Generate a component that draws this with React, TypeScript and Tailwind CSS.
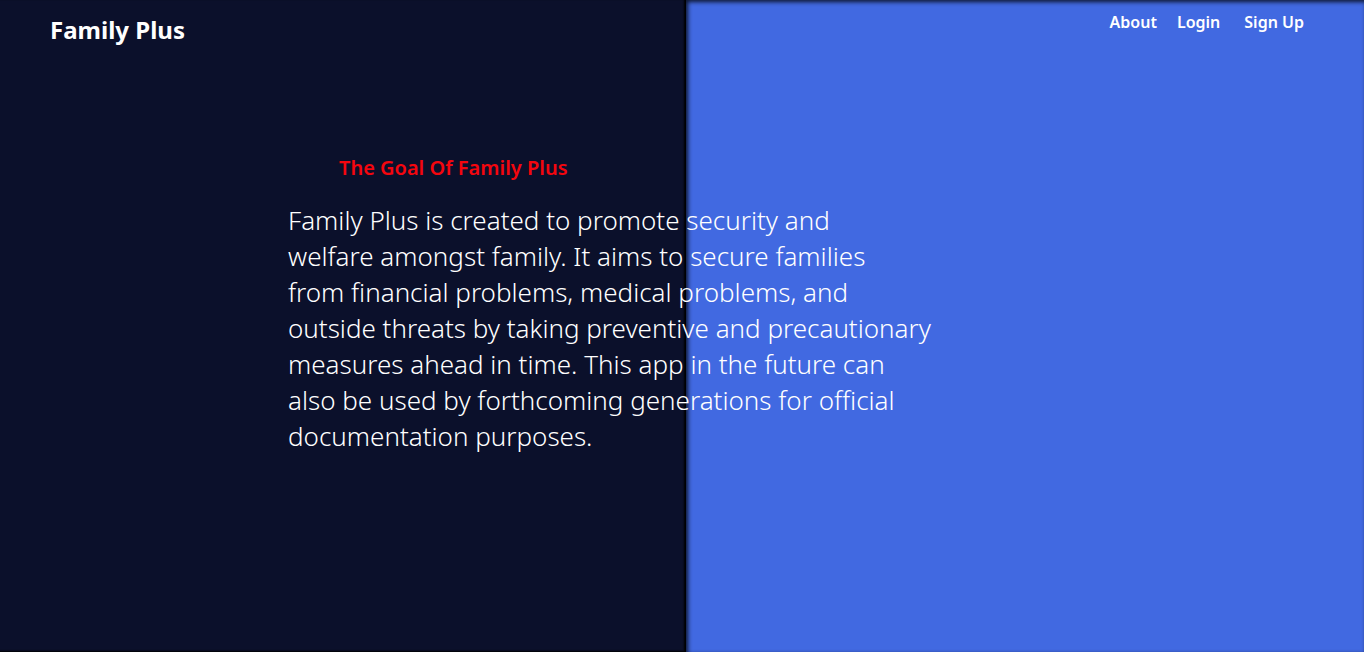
export default function App() {
  return (
    <div className="grid min-h-screen grid-cols-2 bg-[#4169e1] font-['Noto_Sans',sans-serif] text-white">
      <div className="col-start-1 row-start-1 mr-[-4px] bg-[#0b102b] shadow-[inset_-2px_-1px_2px_#000]" />
      <div className="col-start-2 row-start-1 ml-1 shadow-[inset_2px_2px_4px_#000c]" />
      <div className="relative col-span-2 col-start-1 row-start-1">
        <header className="flex items-start justify-between pr-15 pl-[50px]">
          <h1 className="pt-3 text-2xl leading-9 font-bold">Family Plus</h1>
          <nav className="flex pt-[10px] text-base leading-6 font-semibold">
            <a href="#about" className="pr-5">About</a>
            <a href="#login" className="pr-6">Login</a>
            <a href="#signup">Sign Up</a>
          </nav>
        </header>
        <main className="ml-72 max-w-[650px] pt-[108px]">
          <h2 className="pl-[51px] text-xl leading-6 font-semibold text-[#f5060e]">The Goal Of Family Plus</h2>
          <p className="pt-[22px] text-[26px] leading-9 font-light">
            Family Plus is created to promote security and<br />
            welfare amongst family. It aims to secure families<br />
            from financial problems, medical problems, and<br />
            outside threats by taking preventive and precautionary<br />
            measures ahead in time. This app in the future can<br />
            also be used by forthcoming generations for official<br />
            documentation purposes.
          </p>
        </main>
      </div>
    </div>
  )
}
